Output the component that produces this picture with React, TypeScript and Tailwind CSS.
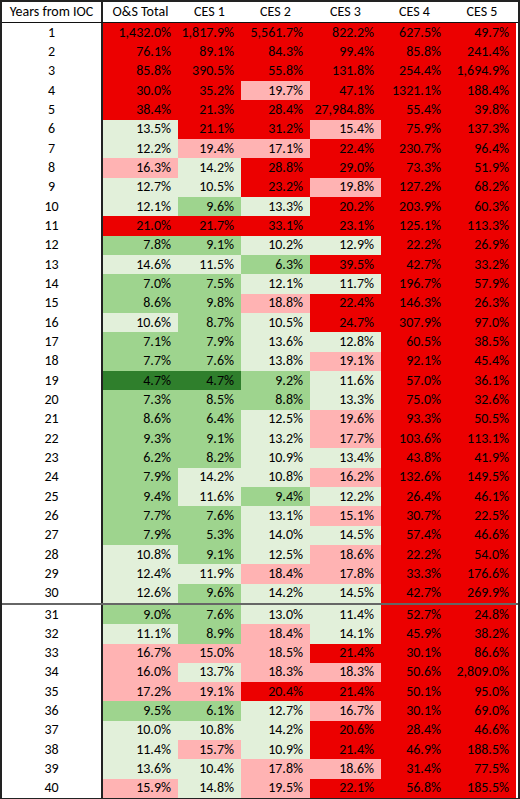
const fills: Record<string, string> = {
  R: 'bg-[#ec0000]',
  P: 'bg-[#ffb3b3]',
  L: 'bg-[#e2f0da]',
  G: 'bg-[#9ed48e]',
  D: 'bg-[#2f7f2c]',
};

// each row: values for O&S Total, CES 1..5, then fill codes in the same order
const rows: [string[], string][] = [
  [['1,432.0%', '1,817.9%', '5,561.7%', '822.2%', '627.5%', '49.7%'], 'RRRRRR'],
  [['76.1%', '89.1%', '84.3%', '99.4%', '85.8%', '241.4%'], 'RRRRRR'],
  [['85.8%', '390.5%', '55.8%', '131.8%', '254.4%', '1,694.9%'], 'RRRRRR'],
  [['30.0%', '35.2%', '19.7%', '47.1%', '1321.1%', '188.4%'], 'RRPRRR'],
  [['38.4%', '21.3%', '28.4%', '27,984.8%', '55.4%', '39.8%'], 'RRRRRR'],
  [['13.5%', '21.1%', '31.2%', '15.4%', '75.9%', '137.3%'], 'LRRPRR'],
  [['12.2%', '19.4%', '17.1%', '22.4%', '230.7%', '96.4%'], 'LPPRRR'],
  [['16.3%', '14.2%', '28.8%', '29.0%', '73.3%', '51.9%'], 'PLRRRR'],
  [['12.7%', '10.5%', '23.2%', '19.8%', '127.2%', '68.2%'], 'LLRPRR'],
  [['12.1%', '9.6%', '13.3%', '20.2%', '203.9%', '60.3%'], 'LGLRRR'],
  [['21.0%', '21.7%', '33.1%', '23.1%', '125.1%', '113.3%'], 'RRRRRR'],
  [['7.8%', '9.1%', '10.2%', '12.9%', '22.2%', '26.9%'], 'GGLLRR'],
  [['14.6%', '11.5%', '6.3%', '39.5%', '42.7%', '33.2%'], 'LLGRRR'],
  [['7.0%', '7.5%', '12.1%', '11.7%', '196.7%', '57.9%'], 'GGLLRR'],
  [['8.6%', '9.8%', '18.8%', '22.4%', '146.3%', '26.3%'], 'GGPRRR'],
  [['10.6%', '8.7%', '10.5%', '24.7%', '307.9%', '97.0%'], 'LGLRRR'],
  [['7.1%', '7.9%', '13.6%', '12.8%', '60.5%', '38.5%'], 'GGLLRR'],
  [['7.7%', '7.6%', '13.8%', '19.1%', '92.1%', '45.4%'], 'GGLPRR'],
  [['4.7%', '4.7%', '9.2%', '11.6%', '57.0%', '36.1%'], 'DDGLRR'],
  [['7.3%', '8.5%', '8.8%', '13.3%', '75.0%', '32.6%'], 'GGGLRR'],
  [['8.6%', '6.4%', '12.5%', '19.6%', '93.3%', '50.5%'], 'GGLPRR'],
  [['9.3%', '9.1%', '13.2%', '17.7%', '103.6%', '113.1%'], 'GGLPRR'],
  [['6.2%', '8.2%', '10.9%', '13.4%', '43.8%', '41.9%'], 'GGLLRR'],
  [['7.9%', '14.2%', '10.8%', '16.2%', '132.6%', '149.5%'], 'GLLPRR'],
  [['9.4%', '11.6%', '9.4%', '12.2%', '26.4%', '46.1%'], 'GLGLRR'],
  [['7.7%', '7.6%', '13.1%', '15.1%', '30.7%', '22.5%'], 'GGLPRR'],
  [['7.9%', '5.3%', '14.0%', '14.5%', '57.4%', '46.6%'], 'GGLLRR'],
  [['10.8%', '9.1%', '12.5%', '18.6%', '22.2%', '54.0%'], 'LGLPRR'],
  [['12.4%', '11.9%', '18.4%', '17.8%', '33.3%', '176.6%'], 'LLPPRR'],
  [['12.6%', '9.6%', '14.2%', '14.5%', '42.7%', '269.9%'], 'LGLLRR'],
  [['9.0%', '7.6%', '13.0%', '11.4%', '52.7%', '24.8%'], 'GGLLRR'],
  [['11.1%', '8.9%', '18.4%', '14.1%', '45.9%', '38.2%'], 'LGPLRR'],
  [['16.7%', '15.0%', '18.5%', '21.4%', '30.1%', '86.6%'], 'PPPRRR'],
  [['16.0%', '13.7%', '18.3%', '18.3%', '50.6%', '2,809.0%'], 'PLPPRR'],
  [['17.2%', '19.1%', '20.4%', '21.4%', '50.1%', '95.0%'], 'PPRRRR'],
  [['9.5%', '6.1%', '12.7%', '16.7%', '30.1%', '69.0%'], 'GGLPRR'],
  [['10.0%', '10.8%', '14.2%', '20.6%', '28.4%', '46.6%'], 'LLLRRR'],
  [['11.4%', '15.7%', '10.9%', '21.4%', '46.9%', '188.5%'], 'LPLRRR'],
  [['13.6%', '10.4%', '17.8%', '18.6%', '31.4%', '77.5%'], 'LLPPRR'],
  [['15.9%', '14.8%', '19.5%', '22.1%', '56.8%', '185.5%'], 'PLPRRR'],
];

const headers = ['O&S Total', 'CES 1', 'CES 2', 'CES 3', 'CES 4', 'CES 5'];
const grid = 'grid grid-cols-[101px_75px_63px_69px_71px_67px_68px]';

function Row({ year, values, codes }: { year: number; values: string[]; codes: string }) {
  return (
    <div className={`${grid} h-[19.33px]`}>
      <div className="border-r-2 border-[#222] flex items-center justify-center">{year}</div>
      {values.map((v, i) => (
        <div key={i} className={`${fills[codes[i]]} flex items-center justify-end pr-[7px]`}>
          {v}
        </div>
      ))}
    </div>
  );
}

export default function App() {
  return (
    <div className="w-[520px] h-[799px] bg-white">
      <div
        className="border-2 border-[#222] text-[14px] leading-none text-black"
        style={{ fontFamily: 'Calibri, Carlito, "Liberation Sans", sans-serif' }}
      >
        <div className={`${grid} h-[21px] border-b border-[#111]`}>
          <div className="border-r-2 border-[#222] flex items-center justify-center">Years from IOC</div>
          {headers.map((h) => (
            <div key={h} className="flex items-center justify-center">
              {h}
            </div>
          ))}
        </div>
        {rows.slice(0, 30).map(([vals, codes], i) => (
          <Row key={i} year={i + 1} values={vals} codes={codes} />
        ))}
        <div className="h-[2px] bg-[#666]" />
        {rows.slice(30).map(([vals, codes], i) => (
          <Row key={i + 30} year={i + 31} values={vals} codes={codes} />
        ))}
      </div>
    </div>
  );
}
